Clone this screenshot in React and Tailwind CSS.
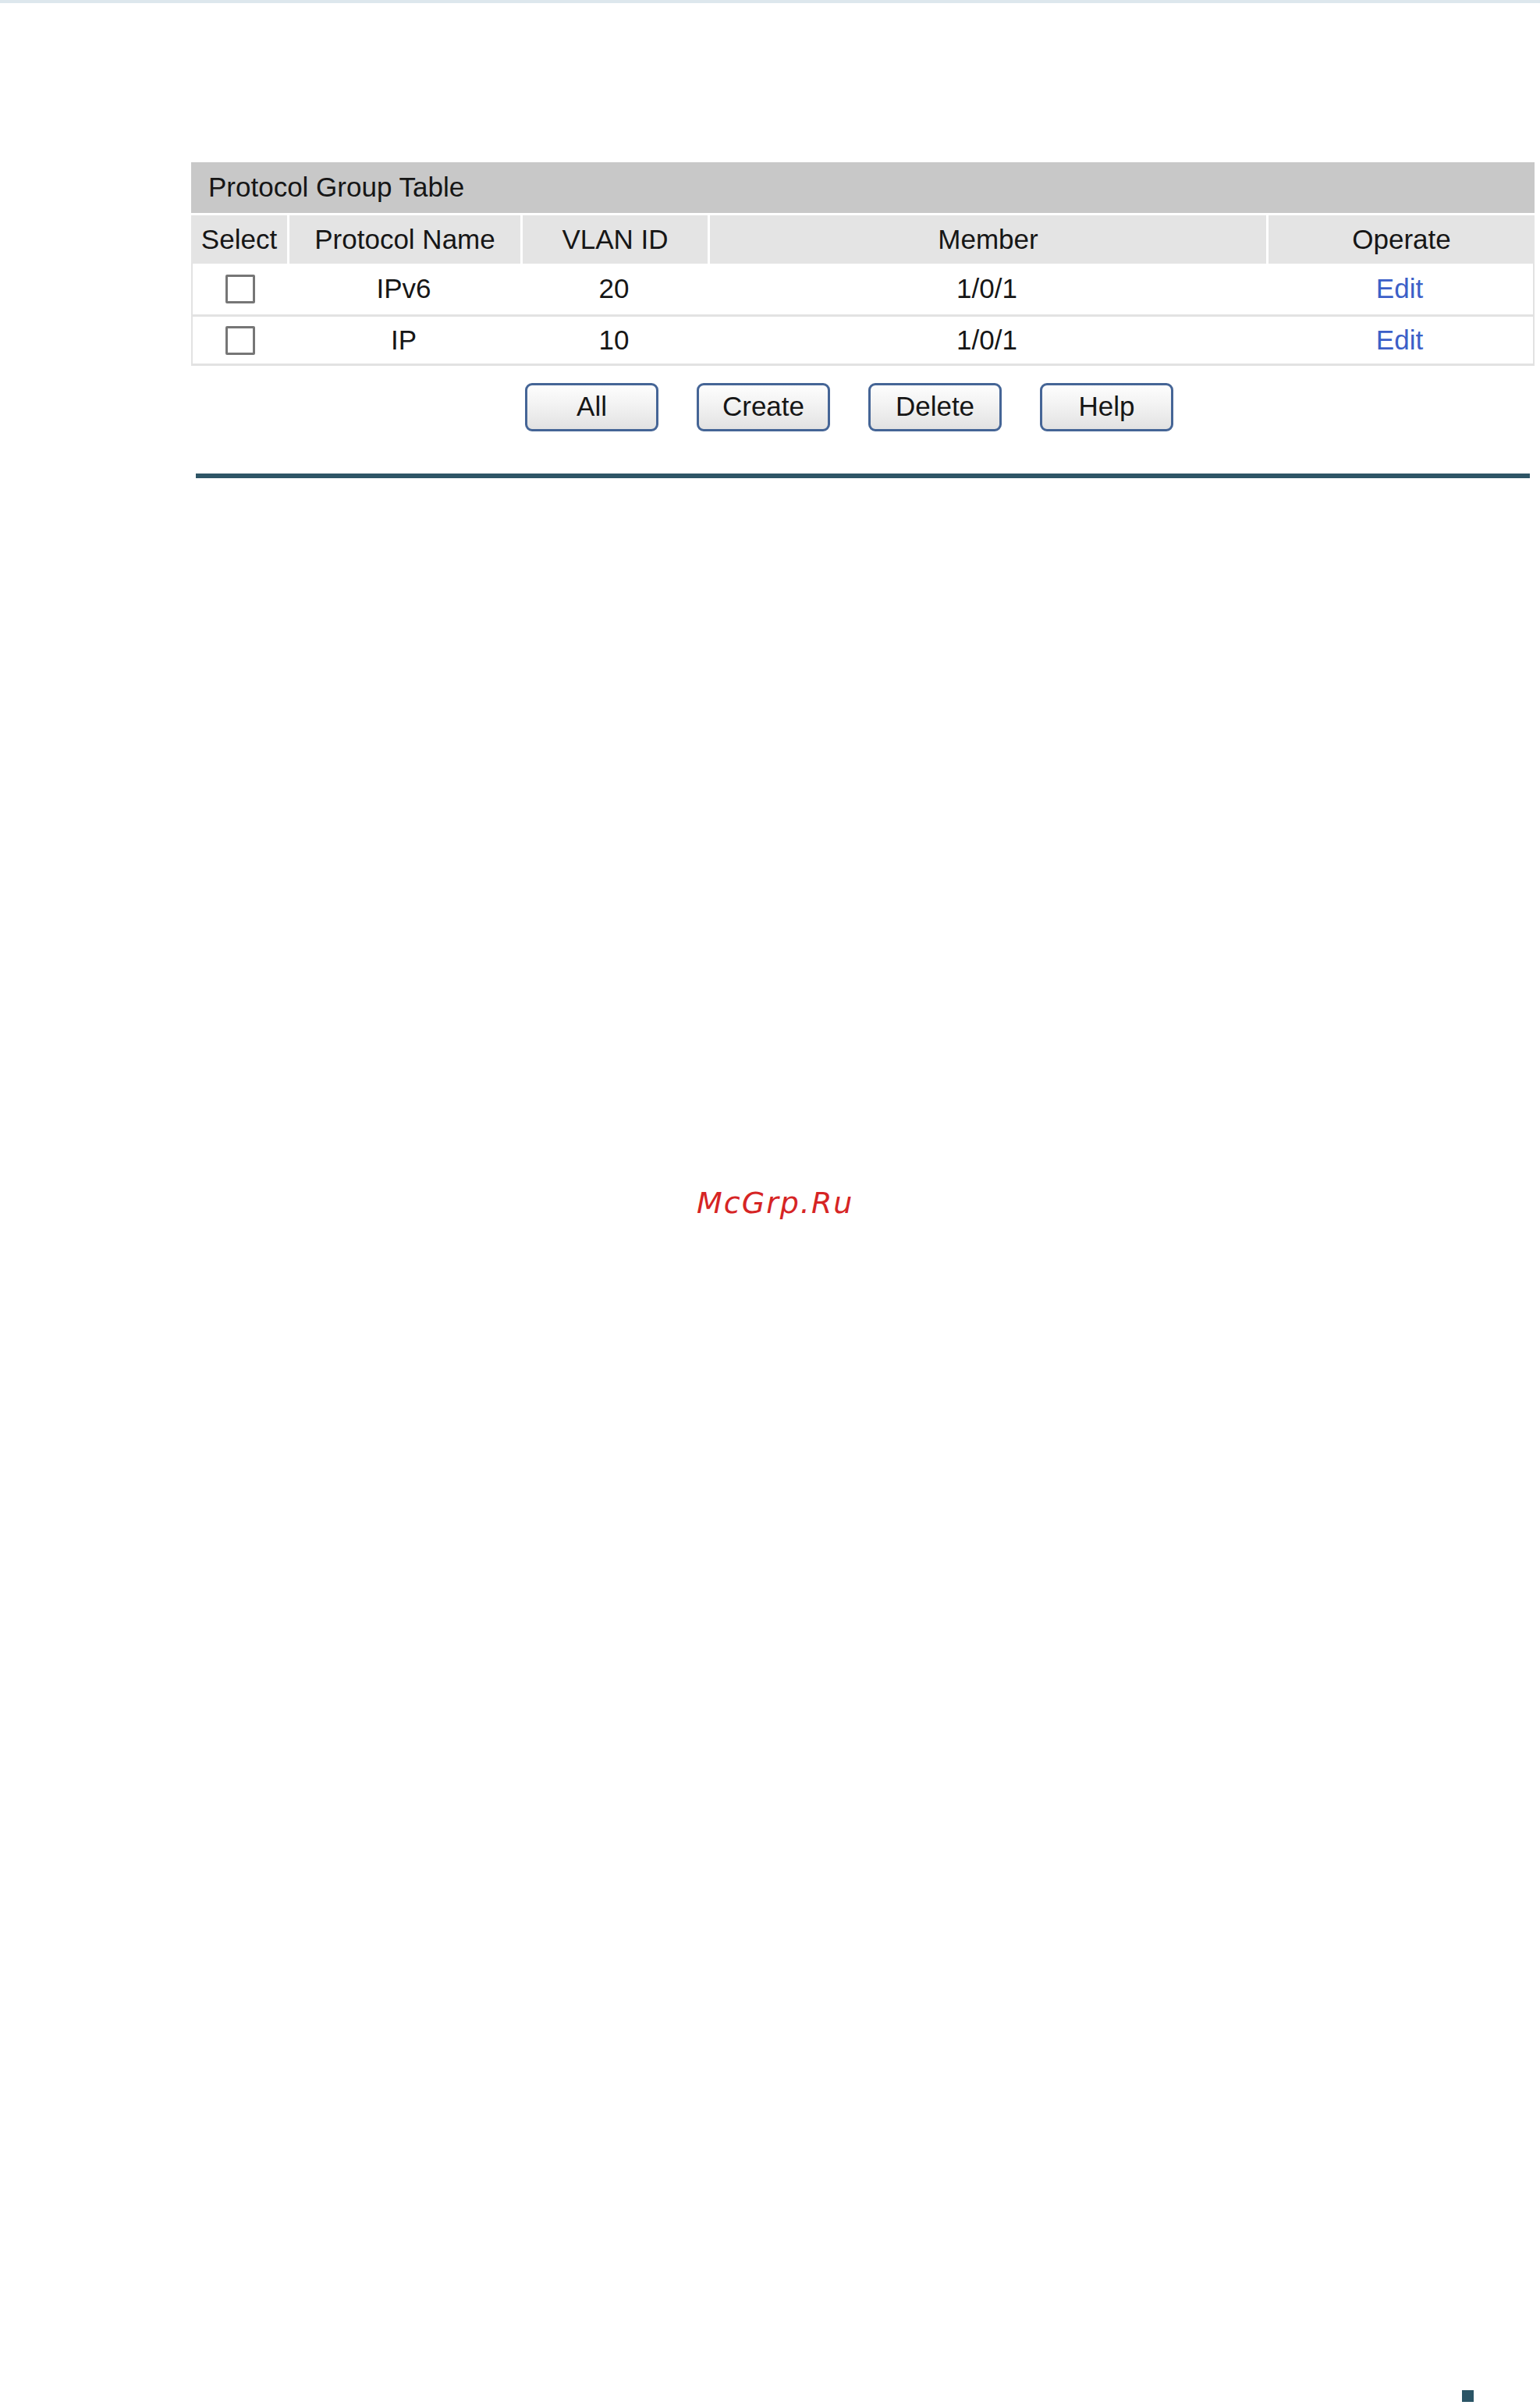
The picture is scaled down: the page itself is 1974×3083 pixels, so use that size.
import React from "react";

const cols = [
  { key: "select", label: "Select", w: "w-[123px]" },
  { key: "name", label: "Protocol Name", w: "w-[299px]" },
  { key: "vlan", label: "VLAN ID", w: "w-[240px]" },
  { key: "member", label: "Member", w: "w-[716px]" },
  { key: "operate", label: "Operate", w: "flex-1" },
];

const rows = [
  { name: "IPv6", vlan: "20", member: "1/0/1", h: "h-[68px]" },
  { name: "IP", vlan: "10", member: "1/0/1", h: "h-[63px]" },
];

function Checkbox() {
  return <span className="block w-[38px] h-[37px] border-[3px] border-[#767676] rounded-[2px] bg-white" />;
}

function Btn({ children }) {
  return (
    <button className="w-[171px] h-[62px] rounded-[9px] border-[3px] border-[#456596] bg-gradient-to-b from-[#fdfdfd] via-[#f1f1f1] to-[#e2e2e2] text-[35px] leading-none text-[#161616] flex items-center justify-center pb-[4px]">
      {children}
    </button>
  );
}

export default function App() {
  return (
    <div
      className="relative w-[1974px] h-[3083px] bg-white"
      style={{ fontFamily: '"Liberation Sans", Arial, sans-serif' }}
    >
      <div className="h-[4px] bg-[#dde7ed]" />

      <div className="pl-[245px] pt-[204px]">
        <div className="w-[1722px]">
          <div className="h-[65px] bg-[#c8c8c8] flex items-center pl-[22px] text-[35px] text-[#161616]">
            Protocol Group Table
          </div>

          <div className="mt-[3px] flex h-[62px]">
            {cols.map((c, i) => (
              <div
                key={c.key}
                className={`${c.w} bg-[#e4e4e4] flex items-center justify-center text-[35px] text-[#161616] ${i > 0 ? "border-l-[3px] border-white" : ""}`}
              >
                {c.label}
              </div>
            ))}
          </div>

          {rows.map((r) => (
            <div
              key={r.name}
              className={`flex ${r.h} border-x-[2px] border-b-[3px] border-[#e2e2e2] bg-white text-[35px] text-[#161616]`}
            >
              <div className="w-[121px] flex items-center justify-center">
                <Checkbox />
              </div>
              <div className="w-[299px] flex items-center justify-center">{r.name}</div>
              <div className="w-[240px] flex items-center justify-center">{r.vlan}</div>
              <div className="w-[716px] flex items-center justify-center">{r.member}</div>
              <div className="flex-1 flex items-center justify-center text-[#3b5fc8]">Edit</div>
            </div>
          ))}
        </div>

        <div className="mt-[22px] pl-[428px] flex gap-[49px]">
          <Btn>All</Btn>
          <Btn>Create</Btn>
          <Btn>Delete</Btn>
          <Btn>Help</Btn>
        </div>

        <div className="mt-[54px] ml-[6px] w-[1710px] h-[6px] bg-[#2e5566]" />
      </div>

      <div
        className="absolute left-[893px] top-[1514px] text-[38px] italic tracking-[2px] text-[#d62424]"
        style={{ fontFamily: '"DejaVu Sans", sans-serif' }}
      >
        McGrp.Ru
      </div>

      <div className="absolute left-[1874px] top-[3064px] w-[15px] h-[15px] bg-[#2b5566]" />
    </div>
  );
}
